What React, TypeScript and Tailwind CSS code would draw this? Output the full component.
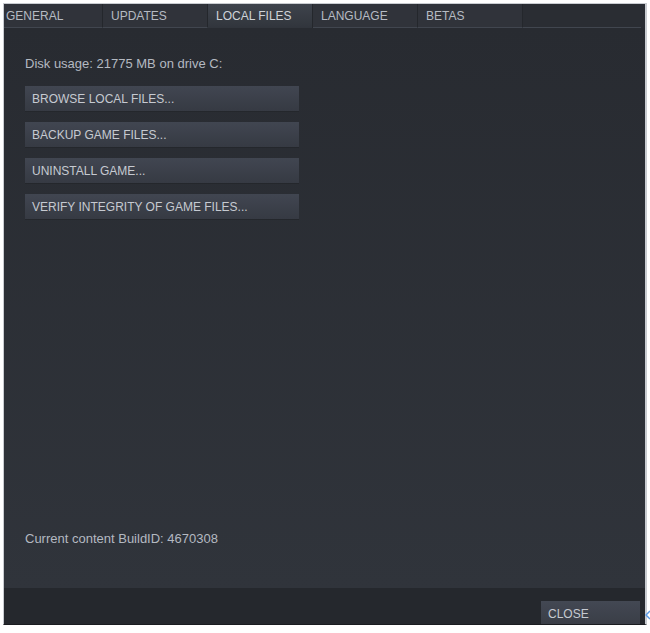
import React from 'react';

const tabs = ['GENERAL', 'UPDATES', 'LOCAL FILES', 'LANGUAGE', 'BETAS'];
const actions = [
  'BROWSE LOCAL FILES...',
  'BACKUP GAME FILES...',
  'UNINSTALL GAME...',
  'VERIFY INTEGRITY OF GAME FILES...',
];

export default function App() {
  const active = 'LOCAL FILES';

  return (
    <div
      className="relative w-[650px] h-[633px] bg-white pt-[3px] pl-[3px] overflow-hidden"
      style={{ fontFamily: '"Liberation Sans", Arial, sans-serif' }}
    >
      <div className="relative w-[644px] h-[622px] border-t border-l border-r-2 border-b border-[#c9ccd1] border-b-[#1a1c20] bg-[#2a2d33] flex flex-col overflow-hidden">
        {/* Tabs */}
        <div className="h-[24px] flex bg-[#2a2d33] -ml-[6px]">
          {tabs.map((t) => (
            <div
              key={t}
              className={`w-[105px] h-full flex items-center pl-[8px] text-[12px] border-r border-[#24272c] ${
                t === active
                  ? 'bg-gradient-to-b from-[#3e434c] to-[#31353c] text-[#cfd3d9]'
                  : 'bg-[#30333a] text-[#b6bbc3] border-b border-b-[#41464f]'
              }`}
            >
              {t}
            </div>
          ))}
          <div className="flex-1 border-b border-[#41464f] mr-[4px]" />
        </div>

        {/* Content */}
        <div className="flex-1 flex flex-col bg-gradient-to-b from-[#282b31] to-[#30343b] pl-[21px]">
          <div className="mt-[28px] text-[13px] text-[#b4b9c1] leading-[16px]">
            Disk usage: 21775 MB on drive C:
          </div>
          <div className="mt-[14px] flex flex-col gap-[11px]">
            {actions.map((a) => (
              <div
                key={a}
                className="w-[274px] h-[25px] flex items-center pl-[7px] text-[12px] text-[#c6cad1] bg-gradient-to-b from-[#414651] to-[#363a43] shadow-[0_1px_0_#24272c]"
              >
                {a}
              </div>
            ))}
          </div>
          <div className="flex-1" />
          <div className="mb-[41px] text-[13px] text-[#b4b9c1] leading-[16px]">
            Current content BuildID: 4670308
          </div>
        </div>

        {/* Footer */}
        <div className="h-[36px] bg-[#25282d] flex justify-end items-end pr-[5px]">
          <div className="w-[99px] h-[23px] flex items-center pl-[7px] pt-[3px] text-[12px] text-[#c6cad1] bg-gradient-to-b from-[#434853] to-[#3a3e47]">
            CLOSE
          </div>
        </div>
      </div>
      <svg className="absolute left-[645px] top-[609px]" width="8" height="12" viewBox="0 0 8 12">
        <path d="M5 2 L1 6 L5 10" fill="none" stroke="#5b9be6" strokeWidth="1.5" />
      </svg>
    </div>
  );
}
